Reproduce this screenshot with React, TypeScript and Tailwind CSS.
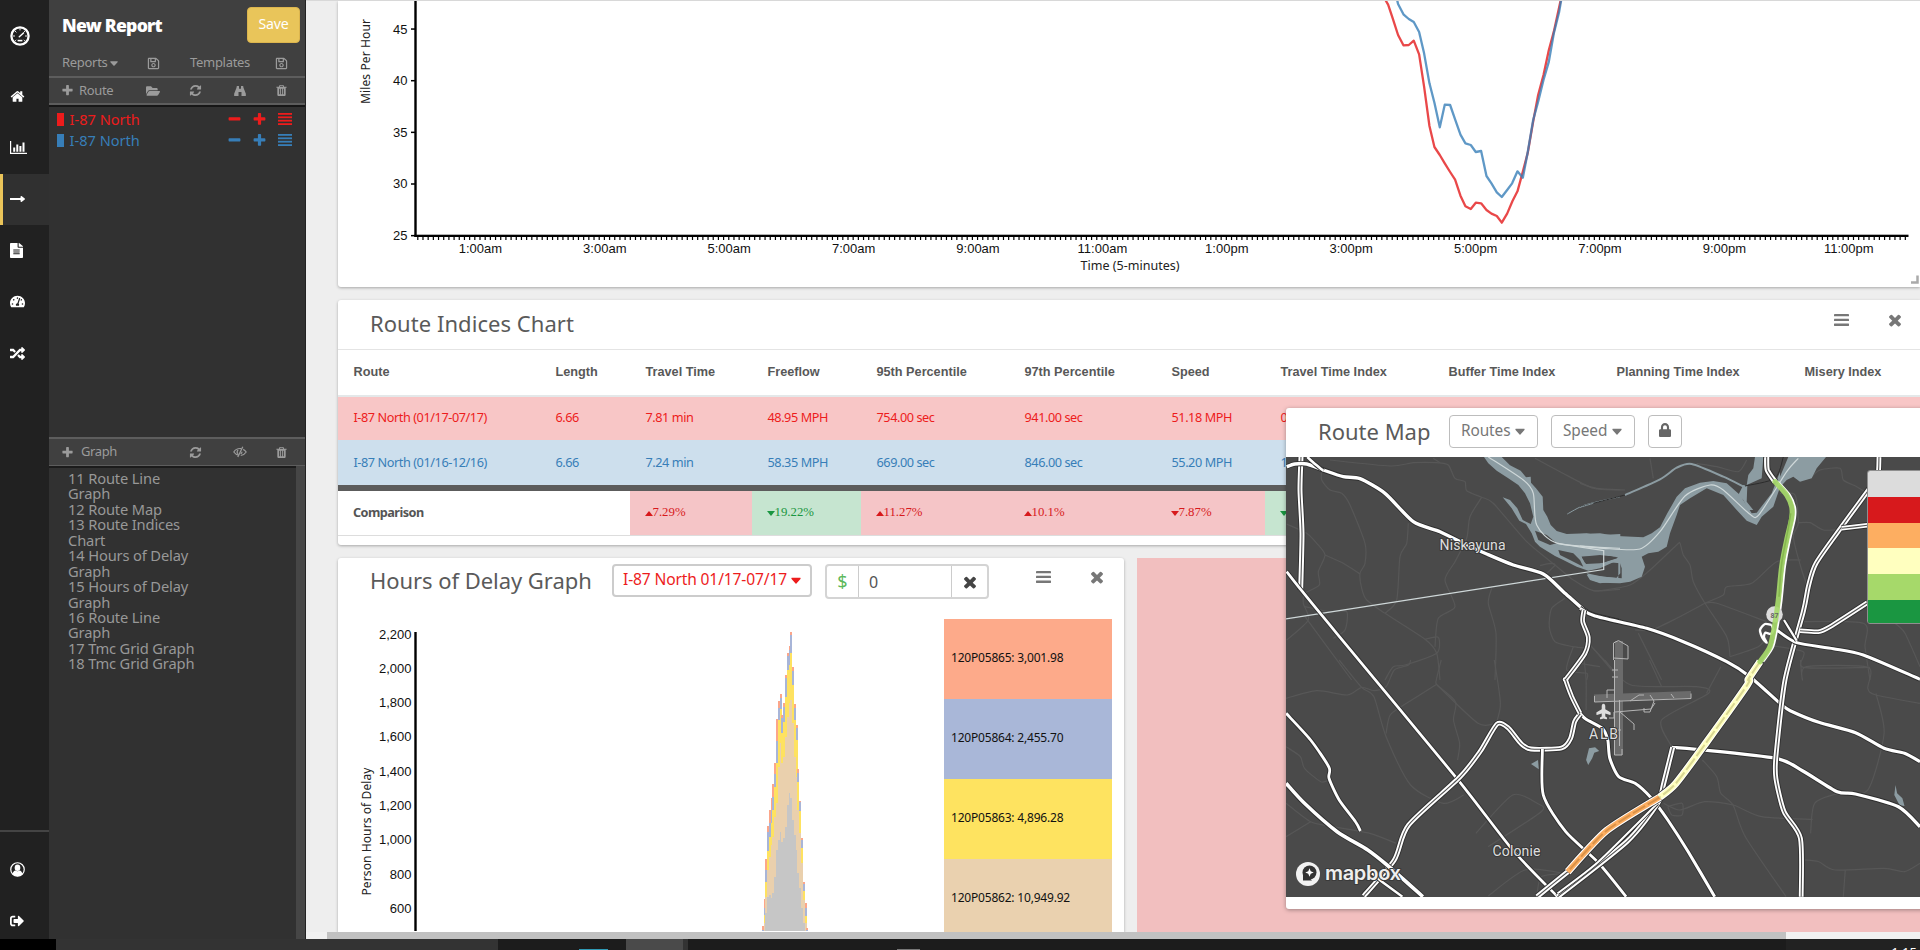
import type { ReactNode } from "react";
import {
  FaRegSave,
  FaFolderOpen,
  FaLongArrowAltRight,
  FaFileAlt,
  FaTachometerAlt,
  FaRandom,
  FaSignOutAlt,
  FaLock,
  FaCaretDown,
  FaPlane,
} from "react-icons/fa";

/* ---------- icons ---------- */

function Glyph({ d, className }: { d: string; className: string }) {
  return (
    <svg viewBox="0 0 1792 1792" className={className} fill="currentColor">
      <path d={d} />
    </svg>
  );
}

const TRASH =
  "M704 1376v-704q0-14-9-23t-23-9h-64q-14 0-23 9t-9 23v704q0 14 9 23t23 9h64q14 0 23-9t9-23zm256 0v-704q0-14-9-23t-23-9h-64q-14 0-23 9t-9 23v704q0 14 9 23t23 9h64q14 0 23-9t9-23zm256 0v-704q0-14-9-23t-23-9h-64q-14 0-23 9t-9 23v704q0 14 9 23t23 9h64q14 0 23-9t9-23zm-544-992h448l-48-117q-7-9-17-11h-317q-10 2-17 11zm928 32v64q0 14-9 23t-23 9h-96v948q0 83-47 143.500t-113 60.500h-832q-66 0-113-58.500t-47-141.500v-952h-96q-14 0-23-9t-9-23v-64q0-14 9-23t23-9h309l70-167q15-37 54-63t79-26h320q40 0 79 26t54 63l70 167h309q14 0 23 9t9 23z";
const HOME =
  "M1472 992v480q0 26-19 45t-45 19h-384v-384h-256v384h-384q-26 0-45-19t-19-45v-480q0-1 .5-3t.5-3l575-474 575 474q1 2 1 6zm223-69l-62 74q-8 9-21 11h-3q-13 0-21-7l-692-577-692 577q-12 8-24 7-13-2-21-11l-62-74q-8-10-7-23.500t11-21.500l719-599q32-26 76-26t76 26l244 204v-195q0-14 9-23t23-9h192q14 0 23 9t9 23v408l219 182q10 8 11 21.500t-7 23.500z";
const TIMES =
  "M1490 1322q0 40-28 68l-136 136q-28 28-68 28t-68-28l-294-294-294 294q-28 28-68 28t-68-28l-136-136q-28-28-28-68t28-68l294-294-294-294q-28-28-28-68t28-68l136-136q28-28 68-28t68 28l294 294 294-294q28-28 68-28t68 28l136 136q28 28 28 68t-28 68l-294 294 294 294q28 28 28 68z";
const PLUS =
  "M1600 736v192q0 40-28 68t-68 28h-416v416q0 40-28 68t-68 28h-192q-40 0-68-28t-28-68v-416h-416q-40 0-68-28t-28-68v-192q0-40 28-68t68-28h416v-416q0-40 28-68t68-28h192q40 0 68 28t28 68v416h416q40 0 68 28t28 68z";
const MINUS =
  "M1600 736v192q0 40-28 68t-68 28h-1216q-40 0-68-28t-28-68v-192q0-40 28-68t68-28h1216q40 0 68 28t28 68z";
const REFRESH =
  "M1639 1056q0 5-1 7-64 268-268 434.500t-478 166.500q-146 0-282.500-55t-243.500-157l-129 129q-19 19-45 19t-45-19-19-45v-448q0-26 19-45t45-19h448q26 0 45 19t19 45-19 45l-137 137q71 66 161 102t187 36q134 0 250-65t186-179q11-17 53-117 8-23 30-23h192q13 0 22.500 9.500t9.500 22.500zm25-800v448q0 26-19 45t-45 19h-448q-26 0-45-19t-19-45 19-45l138-138q-148-137-349-137-134 0-250 65t-186 179q-11 17-53 117-8 23-30 23h-199q-13 0-22.500-9.500t-9.500-22.500v-7q65-268 270-434.500t480-166.500q146 0 284 55.500t245 156.500l130-129q19-19 45-19t45 19 19 45z";

function Lines({ className }: { className: string }) {
  return (
    <svg viewBox="0 0 15 12" className={className} fill="currentColor" preserveAspectRatio="none">
      <rect y="0" width="15" height="2.300" rx="0.4" />
      <rect y="4.800" width="15" height="2.300" rx="0.4" />
      <rect y="9.600" width="15" height="2.300" rx="0.4" />
    </svg>
  );
}

function DenseLines({ className }: { className: string }) {
  return (
    <svg viewBox="0 0 14 12" className={className} fill="currentColor">
      <rect y="0" width="14" height="1.800" />
      <rect y="3.400" width="14" height="1.800" />
      <rect y="6.800" width="14" height="1.800" />
      <rect y="10.200" width="14" height="1.800" />
    </svg>
  );
}

function Binoculars() {
  return (
    <svg viewBox="0 0 14 12" className="h-[10px] w-[14px]" fill="currentColor">
      <path d="M3.200 0h2.600v3.200H8.200V0h2.600l.4 2.200L14 9.400V12H8.800V7.200H5.200V12H0V9.400L2.800 2.200z" />
    </svg>
  );
}

function HiddenEye() {
  return (
    <svg viewBox="0 0 14 12" className="h-[12px] w-[14px]" fill="none" stroke="currentColor" strokeWidth="1.200">
      <path d="M5.800 9.200C3.400 8.800 1.700 7.300.8 6c1.300-2 3.400-3.500 6.200-3.500.5 0 .9 0 1.300.1" />
      <path d="M10.200 3.400c1.300.6 2.300 1.600 3 2.600-1.100 1.700-3 3.200-5.400 3.500" />
      <path d="M5 7.800C3.800 6.800 3.800 5 5.200 4M9 5.800c0 1-.6 1.800-1.300 2.200M9.800.8L4.800 11" strokeWidth="1.300" />
    </svg>
  );
}

function UserBadge() {
  return (
    <svg viewBox="0 0 16 16" className="size-[15px]">
      <circle cx="8" cy="8" r="7.200" fill="none" stroke="#fff" strokeWidth="1.300" />
      <ellipse cx="8" cy="6.200" rx="3" ry="3.500" fill="#fff" />
      <path d="M2.800 12.800c.4-2.600 1.600-3.600 3-3.800 1 1.100 3.400 1.100 4.400 0 1.400.2 2.600 1.200 3 3.800-2.700 3.200-7.700 3.200-10.400 0z" fill="#fff" />
    </svg>
  );
}

function Gauge() {
  return (
    <svg viewBox="0 0 20 20" className="size-5" fill="none" stroke="#fff">
      <circle cx="10" cy="10" r="8.600" strokeWidth="2.300" />
      <path d="M10 2.400v2M3 10h2M15 10h2M5 5l1.400 1.400M15 5l-1.400 1.400M5.200 14.800l1-1M14.800 14.800l-1-1" strokeWidth="0.9" />
      <path d="M9.300 10.800l4.200-3.800" strokeWidth="1.500" strokeLinecap="round" />
      <path d="M7.600 14.600h4.800" strokeWidth="1.600" />
    </svg>
  );
}

function BarChartIcon() {
  return (
    <svg viewBox="0 0 17 13" className="h-[13px] w-[17px]" fill="#fff">
      <path d="M0 0h1.200v11.700H17V13H0zM3.200 6.500h2v4.300h-2zM6.300 3.500h2v7.300h-2zM9.400 5h2v5.800h-2zM12.500 1.500h2v9.300h-2z" />
    </svg>
  );
}

/* ---------- left rail ---------- */

function RailItem({ children, active }: { children: ReactNode; active?: boolean }) {
  return (
    <div
      className={
        active
          ? "flex h-[51.400px] shrink-0 items-center border-l-3 border-[#eac459] bg-[#303030] pb-px pl-[7px]"
          : "flex h-[51.400px] shrink-0 items-center pb-px pl-[10px]"
      }
    >
      {children}
    </div>
  );
}

function Rail() {
  return (
    <nav className="flex w-[49px] shrink-0 flex-col bg-[#212121] text-[15px] text-white">
      <div className="flex h-[71px] shrink-0 items-center pl-[10px]">
        <Gauge />
      </div>
      <RailItem>
        <Glyph d={HOME} className="size-[15px]" />
      </RailItem>
      <RailItem>
        <BarChartIcon />
      </RailItem>
      <RailItem active>
        <FaLongArrowAltRight className="h-[14px] w-[15px]" preserveAspectRatio="none" />
      </RailItem>
      <RailItem>
        <FaFileAlt className="h-[15px] w-[13px]" preserveAspectRatio="none" />
      </RailItem>
      <RailItem>
        <FaTachometerAlt />
      </RailItem>
      <RailItem>
        <FaRandom />
      </RailItem>
      <div className="mt-auto h-[109px] shrink-0 border-t-2 border-[#444] pt-3">
        <RailItem>
          <UserBadge />
        </RailItem>
        <RailItem>
          <FaSignOutAlt className="size-[14px]" />
        </RailItem>
      </div>
    </nav>
  );
}

/* ---------- sidebar ---------- */

function RouteRow({ colour, swatch }: { colour: string; swatch: string }) {
  return (
    <div className={`flex h-[20.800px] items-center pl-[7.500px] ${colour}`}>
      <span className={`h-[13px] w-[7px] ${swatch}`} />
      <span className="ml-[6px] w-[157px] pt-px text-[14.600px]">I-87 North</span>
      <Glyph d={MINUS} className="mr-[10px] size-[15px]" />
      <Glyph d={PLUS} className="mr-[11px] size-[15px]" />
      <DenseLines className="h-[12px] w-[14px]" />
    </div>
  );
}

const GRAPHS = [
  "11 Route Line Graph",
  "12 Route Map",
  "13 Route Indices Chart",
  "14 Hours of Delay Graph",
  "15 Hours of Delay Graph",
  "16 Route Line Graph",
  "17 Tmc Grid Graph",
  "18 Tmc Grid Graph",
];

function Sidebar() {
  return (
    <aside className="flex w-[257px] shrink-0 flex-col border-r border-[#222] bg-[#313131] text-[#9b9b9b]">
      <div className="bg-[#404040]">
        <div className="flex h-[50px] items-start justify-between pr-[5px] pl-[13px]">
          <h1 className="mt-[12px] text-[17.600px] leading-[26px] font-black tracking-[-0.75px] text-white">New Report</h1>
          <button className="mt-[7px] h-[36px] w-[53px] rounded border border-[#dcb54e] bg-[#e9c55a] pb-0.5 text-[14.200px] tracking-[-0.2px] text-white">Save</button>
        </div>
        <div className="grid h-[26px] grid-cols-[85px_43px_85px_1fr] items-center pl-[13px] text-[13px] tracking-[-0.3px]">
          <span className="flex items-center gap-[3px]">
            Reports <FaCaretDown className="h-[14px] w-[8px]" preserveAspectRatio="none" />
          </span>
          <FaRegSave className="size-[13px]" />
          <span>Templates</span>
          <FaRegSave className="size-[13px]" />
        </div>
        <div className="grid h-[29px] grid-cols-[85px_43px_44px_42px_1fr] items-center border-y-2 border-[#5d5d5d] pl-[12px] text-[13px] tracking-[-0.35px]">
          <span className="flex items-center gap-[5px]">
            <Glyph d={PLUS} className="size-[13px]" /> Route
          </span>
          <FaFolderOpen className="size-[14px]" />
          <Glyph d={REFRESH} className="size-[13px]" />
          <Binoculars />
          <Glyph d={TRASH} className="size-[13px]" />
        </div>
        <div className="h-[2px] bg-[#161616]" />
      </div>
      <div className="h-[330px] pt-[2px]">
        <RouteRow colour="text-[#ed1c1c]" swatch="bg-[#ed1c1c]" />
        <RouteRow colour="text-[#377eb8]" swatch="bg-[#377eb8]" />
      </div>
      <div className="grid h-[29px] grid-cols-[128px_44px_42px_1fr] items-center border-t-2 border-b border-[#5d5d5d] bg-[#404040] pl-[12px] text-[13px] tracking-[-0.4px]">
        <span className="flex items-center gap-[7px]">
          <Glyph d={PLUS} className="size-[13px]" /> Graph
        </span>
        <Glyph d={REFRESH} className="size-[13px]" />
        <HiddenEye />
        <Glyph d={TRASH} className="size-[13px]" />
      </div>
      <div className="flex min-h-0 flex-1">
        <ul className="flex-1 border-t-2 border-[#1c1c1c] pt-[3px] pl-[19px] text-[14.700px] leading-[15.430px] tracking-[-0.15px] text-[#989898]">
          {GRAPHS.map((g) => (
            <li key={g} className="w-[135px]">
              {g}
            </li>
          ))}
        </ul>
        <div className="w-[9px] bg-[#464646]" />
      </div>
    </aside>
  );
}

/* ---------- speed chart ---------- */

const HOURS = ["1:00am", "3:00am", "5:00am", "7:00am", "9:00am", "11:00am", "1:00pm", "3:00pm", "5:00pm", "7:00pm", "9:00pm", "11:00pm"];
const RED_LINE =
  "165,-12 178,14 190,55 204,105 218,136 232,135 245,122 259,163 272,260 286,378 299,441 313,465 326,490 340,516 353,539 367,587 380,619 394,627 407,608 421,610 435,630 448,641 462,648 475,668 489,641 503,603 516,574 530,515 543,458 557,365 570,285 584,225 598,150 611,95 630,-5";
const BLUE_LINE =
  "199,-12 204,12 218,43 232,57 245,66 259,96 272,160 286,250 299,308 313,382 326,314 340,315 353,358 367,404 380,430 394,435 407,456 421,453 435,528 448,550 462,577 475,591 489,570 502,550 516,514 530,533 543,455 557,360 570,305 584,240 598,185 611,100 625,35 631,-5";

function SpeedChart() {
  return (
    <svg viewBox="338 1 1582 286" className="block h-[286px] w-[1582px] font-['Liberation_Sans',sans-serif]">
      <g fill="#111" fontSize="13">
        {[45, 40, 35, 30, 25].map((v, i) => (
          <g key={v}>
            <text x="407.500" y={33.5 + i * 51.65} textAnchor="end">
              {v}
            </text>
            <rect x="411" y={28.3 + i * 51.65} width="5" height="1.500" fill="#000" />
          </g>
        ))}
        {HOURS.map((h, i) => (
          <text key={h} x={480.4 + i * 124.4} y="253" textAnchor="middle">
            {h}
          </text>
        ))}
      </g>
      <g fill="#000">
        <rect x="414.300" y="0" width="2.400" height="237" />
        <rect x="414.500" y="234.700" width="1494" height="2.300" />
        {Array.from({ length: 288 }, (_, i) => (
          <rect key={i} x={417.2 + i * 5.183} y="236" width="1.200" height="4" />
        ))}
      </g>
      <g fill="#222" className="font-['Noto_Sans',sans-serif]" fontSize="12">
        <text x="1130" y="270" textAnchor="middle" textLength="99" lengthAdjust="spacingAndGlyphs">
          Time (5-minutes)
        </text>
        <text transform="translate(370 61.500) rotate(-90)" textAnchor="middle" textLength="85">
          Miles Per Hour
        </text>
      </g>
      <g transform="translate(1320 0) scale(0.3827 0.33333)" fill="none" strokeWidth="2.300" strokeOpacity="0.8" strokeLinejoin="round">
        <polyline points={RED_LINE} stroke="#e41a1c" vectorEffect="non-scaling-stroke" />
        <polyline points={BLUE_LINE} stroke="#377eb8" vectorEffect="non-scaling-stroke" />
      </g>
      <path d="M1911 282.500h6.500v-7" fill="none" stroke="#aaa" strokeWidth="2.500" />
    </svg>
  );
}

/* ---------- indices table ---------- */

const COLS = "grid w-[1680px] grid-cols-[202px_90px_122px_109px_148px_147px_109px_168px_168px_188px_1fr]";
const HEADS = ["Route", "Length", "Travel Time", "Freeflow", "95th Percentile", "97th Percentile", "Speed", "Travel Time Index", "Buffer Time Index", "Planning Time Index", "Misery Index"];
const ROW1 = ["I-87 North (01/17-07/17)", "6.66", "7.81 min", "48.95 MPH", "754.00 sec", "941.00 sec", "51.18 MPH", "0.98"];
const ROW2 = ["I-87 North (01/16-12/16)", "6.66", "7.24 min", "58.35 MPH", "669.00 sec", "846.00 sec", "55.20 MPH", "1.08"];
const COMPARE: { up: boolean; good: boolean; text: string }[] = [
  { up: true, good: false, text: "7.29%" },
  { up: false, good: true, text: "19.22%" },
  { up: true, good: false, text: "11.27%" },
  { up: true, good: false, text: "10.1%" },
  { up: false, good: false, text: "7.87%" },
  { up: false, good: true, text: "9.1%" },
];

function IndicesTable() {
  return (
    <section className="h-[245px] overflow-hidden rounded-l-[3px] bg-white shadow-[0_1px_3px_rgba(0,0,0,0.3)]">
      <header className="flex h-[50px] items-center border-b border-[#e4e4e4] pr-[16px] pl-[32px] text-[#777]">
        <h2 className="flex-1 pb-[2px] text-[22px] tracking-[0.05px] text-[#5a5a5a]">Route Indices Chart</h2>
        <Lines className="mt-[-9px] mr-[37px] h-[12px] w-[15px]" />
        <Glyph d={TIMES} className="mt-[-9px] size-[18px]" />
      </header>
      <div className={`${COLS} h-[47px] items-center border-b-2 border-[#e4e8e9] font-['Liberation_Sans',sans-serif] text-[12.700px] font-bold text-[#585858]`}>
        {HEADS.map((h) => (
          <span key={h} className="pt-px pl-[15.500px] whitespace-nowrap">
            {h}
          </span>
        ))}
      </div>
      <div className={`${COLS} h-[43px] items-center bg-[#f8c6c6] text-[12.700px] tracking-[-0.43px] text-[#ed1c1c]`}>
        {ROW1.map((t, i) => (
          <span key={i} className="pb-[2px] pl-[15.500px] whitespace-nowrap">
            {t}
          </span>
        ))}
      </div>
      <div className={`${COLS} h-[45px] items-center bg-[#cddfed] text-[12.700px] tracking-[-0.43px] text-[#377eb8]`}>
        {ROW2.map((t, i) => (
          <span key={i} className="pl-[15.500px] whitespace-nowrap">
            {t}
          </span>
        ))}
      </div>
      <div className="h-[6px] bg-[#5c5c5c]" />
      <div className={`${COLS} h-[45px] border-b border-[#ddd] font-['Liberation_Serif',serif] text-[12.800px]`}>
        <span className="flex items-center pb-px pl-[15px] font-['Noto_Sans',sans-serif] text-[12.700px] font-bold tracking-[-0.55px] text-[#555]">Comparison</span>
        <span />
        {COMPARE.map((c) => (
          <span
            key={c.text}
            className={c.good ? "flex items-center bg-[#c6e5d0] pl-[14.500px] text-[#1a9641]" : "flex items-center bg-[#f5c5c7] pl-[14.500px] text-[#d7191c]"}
          >
            <svg viewBox="0 0 8 5" className="h-[5px] w-2" fill="currentColor">
              <path d={c.up ? "M0 5L4 0l4 5z" : "M0 0h8L4 5z"} />
            </svg>
            {c.text}
          </span>
        ))}
      </div>
    </section>
  );
}

/* ---------- hours of delay ---------- */

const STACK_COLOURS = ["#fca68a", "#a8b5d8", "#fee260", "#ead0ad", "#c6c6c6"];
/* centre, then the top of each stacked layer */
const STACKS: number[][] = [
  [848, 1128, 1140, 1142, 1142, 1142],
  [851.6, 1047, 1073, 1095, 1120, 1142],
  [855.1, 927, 960, 995, 1040, 1090],
  [858.6, 828, 845, 903, 960, 1040],
  [862.1, 780, 818, 860, 920, 1035],
  [865.6, 744, 780, 820, 885, 1043],
  [869.1, 702, 742, 780, 860, 1030],
  [872.6, 640, 671, 710, 800, 980],
  [876.1, 506, 572, 640, 760, 900],
  [879.6, 453, 475, 510, 650, 870],
  [883.1, 432, 445, 478, 580, 845],
  [886.6, 495, 505, 550, 640, 875],
  [890.1, 460, 470, 515, 620, 865],
  [893.6, 375, 385, 440, 560, 830],
  [897.1, 308, 318, 360, 500, 765],
  [900.6, 287, 300, 345, 460, 730],
  [904.1, 246, 256, 310, 450, 745],
  [907.6, 352, 362, 405, 520, 810],
  [911.1, 463, 473, 510, 620, 855],
  [914.6, 525, 535, 570, 680, 900],
  [918.1, 657, 668, 697, 780, 968],
  [921.6, 752, 757, 784, 850, 1015],
  [925.1, 863, 869, 893, 940, 1075],
  [928.6, 995, 1003, 1022, 1050, 1120],
  [932.1, 1060, 1075, 1098, 1120, 1142],
  [935.6, 1134, 1139, 1142, 1142, 1142],
];

const LEGEND = [
  { text: "120P05865: 3,001.98", bg: "bg-[#fdaa8a]" },
  { text: "120P05864: 2,455.70", bg: "bg-[#a9b7d8]" },
  { text: "120P05863: 4,896.28", bg: "bg-[#fee360]" },
  { text: "120P05862: 10,949.92", bg: "bg-[#ead1af]" },
];

function DelayCard() {
  return (
    <section className="flex h-[374px] w-[786px] shrink-0 flex-col overflow-hidden rounded-t-[3px] bg-white shadow-[0_1px_3px_rgba(0,0,0,0.3)]">
      <header className="flex h-[61px] shrink-0 items-start pt-[6px] pl-[32px] text-[#777]">
        <h2 className="w-[242px] text-[22px] leading-[32px] tracking-[-0.05px] whitespace-nowrap text-[#5a5a5a]">Hours of Delay Graph</h2>
        <button className="flex h-[33px] w-[200px] items-center gap-[4px] rounded border-2 border-[#ccc] pb-px pl-[9px] text-[15.600px] tracking-[-0.15px] whitespace-nowrap text-[#ed1c1c]">
          I-87 North 01/17-07/17
          <FaCaretDown className="h-[18px] w-[10px] shrink-0" preserveAspectRatio="none" />
        </button>
        <div className="ml-[13px] flex h-[35px] w-[164px] items-center rounded border-2 border-[#d4d4d4] text-[16px]">
          <span className="flex h-full w-[32px] items-center justify-center border-r border-[#ccc] text-[18px] text-[#5cb85c]">$</span>
          <span className="flex h-full flex-1 items-center pl-[10px] text-[#555]">0</span>
          <span className="flex h-full w-[36px] items-center justify-center border-l border-[#ccc] text-[#444]">
            <Glyph d={TIMES} className="size-[18px]" />
          </span>
        </div>
        <Lines className="mt-[7px] ml-[47px] h-[12px] w-[15px]" />
        <Glyph d={TIMES} className="mt-[4px] ml-[37px] size-[18px]" />
      </header>
      <div className="flex flex-1">
        <svg viewBox="338 619 606 313" className="block h-[313px] w-[606px] font-['Liberation_Sans',sans-serif]">
          <g fill="#111" fontSize="13">
            {["2,200", "2,000", "1,800", "1,600", "1,400", "1,200", "1,000", "800", "600"].map((v, i) => (
              <text key={v} x="411.500" y={638.5 + i * 34.3} textAnchor="end">
                {v}
              </text>
            ))}
          </g>
          <rect x="414.300" y="632" width="2.400" height="299" fill="#000" />
          <text transform="translate(370.500 831.500) rotate(-90)" textAnchor="middle" textLength="128" fontSize="12" fill="#222" className="font-['Noto_Sans',sans-serif]">
            Person Hours of Delay
          </text>
          <g transform="translate(330 550) scale(0.5102 0.33333)" shapeRendering="crispEdges">
            {STACKS.map(([x, ...tops]) =>
              tops.map((t, k) => {
                const bottom = k < 4 ? tops[k + 1] : 1143;
                return <rect key={`${x}-${k}`} x={x - 1.8} y={t} width="3.900" height={Math.max(0, bottom - t)} fill={STACK_COLOURS[k]} />;
              }),
            )}
          </g>
        </svg>
        <div className="w-[168px]">
          {LEGEND.map((l) => (
            <div key={l.text} className={`flex h-[80px] items-center pb-[2px] pl-[7px] text-[12px] tracking-[-0.2px] text-[#111] ${l.bg}`}>
              {l.text}
            </div>
          ))}
        </div>
      </div>
    </section>
  );
}

/* ---------- map ---------- */

type Pt = [number, number];
const tile = (ox: number, oy: number, sx: number, sy: number) => (s: string): Pt[] =>
  s.split(" ").map((p) => {
    const [x, y] = p.split(",").map(Number);
    return [ox + x / sx, oy + y / sy];
  });
const A = tile(1280, 400, 3, 3);
const B = tile(1580, 400, 3, 3);
const C = tile(1280, 660, 2.45, 3);

const n = (v: number) => v.toFixed(1);
function smooth(p: Pt[]): string {
  let d = `M${n(p[0][0])} ${n(p[0][1])}`;
  for (let i = 0; i < p.length - 1; i++) {
    const p0 = p[i - 1] ?? p[i];
    const p1 = p[i];
    const p2 = p[i + 1];
    const p3 = p[i + 2] ?? p2;
    d += `C${n(p1[0] + (p2[0] - p0[0]) / 8)} ${n(p1[1] + (p2[1] - p0[1]) / 8)} ${n(p2[0] - (p3[0] - p1[0]) / 8)} ${n(p2[1] - (p3[1] - p1[1]) / 8)} ${n(p2[0])} ${n(p2[1])}`;
  }
  return d;
}
const area = (p: Pt[]) => "M" + p.map(([x, y]) => `${n(x)} ${n(y)}`).join("L") + "Z";

const MINOR: Pt[][] = [
  A("150,180 330,198 400,188 470,188 505,195 525,235 555,245 560,272 605,292 640,310 740,425 825,495 880,540 940,572 1020,568"),
  B("40,572 60,572 150,555 210,510 290,435 300,430 310,465 330,495 340,545 375,610 440,710 450,770"),
  A("125,210 125,240 150,270 185,280 210,315 255,430 255,490 240,520 245,565 260,600 315,640 435,718 470,760 480,840"),
  A("605,292 570,350 560,415 525,485 495,540 525,620 475,655 465,740"),
  A("385,370 380,430 360,470 350,600 315,640"),
  A("20,372 80,400 110,430 135,465 115,515 118,555 75,580 70,610 85,660 20,720"),
  A("135,465 190,490 240,522"),
  A("75,650 215,840"),
  A("75,620 150,635 200,635 195,690 160,715"),
  A("780,497 810,490 825,495 800,520"),
  A("635,565 625,610 648,700 645,840"),
  A("855,595 815,625 808,680 825,725 880,740 920,745"),
  A("880,740 860,810 920,820 920,840"),
  A("940,745 1020,840"),
  A("435,718 475,712 470,760 375,795 340,800 315,840"),
  A("765,175 840,215 940,265 1020,270"),
  A("460,175 480,188"),
  B("0,250 50,265 135,270"),
  B("210,175 220,235"),
  B("350,190 410,200 475,215 500,180"),
  B("690,235 720,210 780,205 790,240 830,260 862,280"),
  B("600,280 645,285 655,370 640,410 665,510 690,580"),
  B("655,368 690,368 730,390 785,388"),
  B("662,480 590,485 515,550 440,560 430,585 375,610 290,655 215,690 165,690"),
  B("375,610 410,610 560,665"),
  B("570,700 535,740 450,770"),
  B("650,665 850,670 855,740 870,840"),
  B("945,670 975,700 1020,800"),
  B("560,735 670,755 670,802 870,802"),
  B("175,700 245,840"),
  B("0,790 60,800"),
  B("30,735 100,810"),
  C("15,115 90,92 165,105 200,82 230,92 260,80 280,30 315,15 320,0"),
  C("145,0 200,82 230,110 260,230 320,375 400,430 450,405"),
  C("395,0 383,60 385,75 430,125 425,180 440,250 435,300"),
  C("385,72 310,130 270,165 260,220"),
  C("385,75 485,190 530,190"),
  C("525,0 540,130 530,190"),
  C("15,260 50,290 60,325 100,365 120,360"),
  C("15,430 75,485 130,500 220,520 285,550"),
  C("15,530 75,485"),
  C("480,520 570,405 630,430 640,455 510,560"),
  C("745,0 750,60 750,150"),
  C("795,0 860,75 1020,80 1050,100 935,180 960,260"),
  C("905,0 935,80"),
  C("1080,20 1045,100"),
  C("1275,0 1280,60 1290,20 1440,22 1440,85 1460,105 1568,130"),
  C("1460,100 1480,220 1440,390 1370,400 1310,430 1300,520"),
  C("1035,300 1070,350 1080,400 1110,435 1140,530 1240,710"),
  C("940,430 980,450 1040,425 1110,435 1180,470 1305,478"),
  C("950,440 985,430 985,465 960,465 950,440"),
  C("1285,600 1320,605 1360,630 1480,625 1530,635 1568,610"),
  C("1385,630 1380,710"),
  C("510,708 600,630 690,640 640,650 630,700"),
];

const WATER: Pt[][] = [
  A("612,171 665,171 690,196 722,212 738,232 752,230 753,248 768,265 788,290 790,330 802,350 812,375 830,393 860,402 920,400 950,406 1021,402 1021,520 1000,545 960,550 930,540 920,524 975,530 1015,535 1015,480 960,505 925,512 890,500 850,480 825,468 780,440 765,425 755,400 738,372 718,362 695,325 668,292 690,300 712,325 728,360 752,372 760,350 750,310 735,280 715,255 685,235 650,212 625,190"),
  B("0,402 60,400 110,408 190,412 215,400 240,382 262,340 290,290 315,265 360,248 400,243 440,250 480,285 515,340 530,338 575,280 600,215 600,230 625,171 738,171 710,205 695,235 660,245 640,230 620,240 600,262 580,320 545,350 530,375 500,362 470,330 430,285 380,265 330,295 300,315 290,345 270,400 260,440 235,455 205,460 185,470 195,500 185,530 150,545 120,550 60,548 35,540 20,520 70,530 125,535 125,505 120,490 70,485 0,500"),
  B("525,171 550,171 545,235 500,255 505,225 520,205"),
  B("490,255 502,258 500,305 520,330 505,330 490,300 475,285"),
  C("615,312 632,300 634,328"),
  C("757,265 772,262 782,273 770,278 765,295 755,315 750,300"),
  C("1508,375 1512,400 1525,415 1530,438 1518,436 1505,405"),
];
const ISLANDS: Pt[][] = [
  A("765,392 800,405 830,430 810,435 775,420"),
  A("835,450 880,460 900,480 910,500 870,480 840,465"),
  A("905,470 990,468 1012,475 960,490 918,492"),
  B("5,470 60,465 115,472 70,488 15,488"),
];

type RoadSpec = { p: Pt[]; w: number; dual?: boolean };
const ROADS: RoadSpec[] = [
  { p: A("63,171 60,270 66,400 62,570"), w: 5, dual: true },
  { p: A("20,200 45,192 80,192 130,210 190,230 240,236 315,280 400,365 480,395 560,435 620,462 700,495 790,522 850,575 912,630 940,645 1020,665"), w: 3.4 },
  { p: A("82,171 105,192 130,212"), w: 2.6 },
  { p: B("0,625 45,648 200,685 310,725 440,785 510,830").concat(C("1225,130 1250,152 1320,187 1410,218 1480,265 1530,280 1568,305")), w: 3.2 },
  { p: A("20,515 65,572 170,700").concat(C("435,358 570,570 680,710")), w: 2.7 },
  { p: C("735,160 750,178 790,205 803,240 808,295 830,350 870,370 908,412 950,480 1000,575 1065,710"), w: 3 },
  { p: C("735,162 722,185 712,235 690,264 615,267 590,250 560,205 532,192 490,275 440,352 315,495 280,600 205,708"), w: 4.8, dual: true },
  { p: A("912,630 908,665 925,712 915,760 860,835").concat(C("700,60 715,110 735,160")), w: 4.6, dual: true },
  { p: C("643,267 645,405 700,515 780,608 848,710"), w: 2.8 },
  { p: C("15,160 75,240 120,322 120,355 145,420 185,485 197,513"), w: 2.8 },
  { p: C("15,370 60,430 140,515 215,570 265,618 350,710"), w: 3.6 },
  { p: C("225,640 250,665 300,710"), w: 2.4 },
  { p: C("960,262 1020,268 1215,295 1280,332 1365,395 1410,402 1515,440 1568,500"), w: 3.3 },
  { p: B("897,171 893,230 862,275 785,380 708,490 685,560 670,635 615,840").concat(C("1215,290 1215,355 1235,455 1275,535 1277,710")), w: 4.8, dual: true },
  { p: B("785,385 862,376"), w: 4.6, dual: true },
  { p: B("660,692 715,695 750,680 862,608"), w: 4.6, dual: true },
  { p: B("560,171 562,210 585,245"), w: 5.2, dual: true },
  { p: B("590,690 650,728 760,746 850,765 1020,838"), w: 3 },
  { p: B("612,660 650,722"), w: 2.2 },
  { p: C("962,262 940,370 925,430 850,545 680,710"), w: 5, dual: true },
  { p: C("925,430 780,605 680,700"), w: 2 },
  { p: C("705,635 630,710"), w: 5, dual: true },
];
const LOOP = B("575,675 555,672 540,690 548,715 560,728 552,712 556,698 572,702 580,690 575,675");
const I87_GREEN = B("585,245 620,285 635,320 635,355 620,420 605,500 595,600 585,670 570,740 540,785");
const I87_YELLOW = B("540,785 505,838").concat(C("1145,75 1040,255 970,370 930,412"));
const I87_ORANGE = C("930,412 800,512 705,635");

function Road({ p, w, dual }: RoadSpec) {
  const d = smooth(p);
  return (
    <g fill="none" strokeLinejoin="round">
      <path d={d} stroke="#2e2e2e" strokeWidth={w + 1.8} />
      <path d={d} stroke="#fff" strokeWidth={w} />
      {dual && <path d={d} stroke="#505050" strokeWidth="1.100" />}
    </g>
  );
}

function Segment({ p, colour, shade }: { p: Pt[]; colour: string; shade: string }) {
  const d = smooth(p);
  return (
    <g fill="none">
      <path d={d} stroke="#333" strokeWidth="9" />
      <path d={d} stroke="#fff" strokeWidth="7.400" />
      <path d={d} stroke={colour} strokeWidth="5.200" />
      <path d={d} stroke={shade} strokeWidth="2" strokeDasharray="14 3" />
    </g>
  );
}

function MapCanvas() {
  return (
    <svg viewBox="1286 457 634 440" className="block h-[440px] w-[634px] bg-[#4a4a4a]">
      <g fill="none" stroke="#575757" strokeWidth="1.200">
        {MINOR.map((p, i) => (
          <path key={i} d={smooth(p)} />
        ))}
      </g>
      <g fill="#8c9ca2">
        {WATER.map((p, i) => (
          <path key={i} d={area(p)} />
        ))}
      </g>
      <g fill="#4a4a4a">
        {ISLANDS.map((p, i) => (
          <path key={i} d={area(p)} />
        ))}
      </g>
      <g fill="none" stroke="#8c9ca2" strokeWidth="1.500">
        <path d={smooth(A("862,342 915,315 1020,290"))} strokeWidth="1" />
        <path d={smooth(B("0,320 135,285"))} stroke="#2c2c2c" strokeWidth="1" />
        <path d={smooth(B("0,322 40,310"))} strokeWidth="1" />
        <path d={smooth(B("135,285 240,238 290,203 335,192 430,230 495,262"))} strokeWidth="2" />
      </g>
      <path d={smooth(B("495,258 585,235 610,171"))} fill="none" stroke="#2c2c2c" strokeWidth="1" />
      <g fill="none" stroke="#cfd8d9" strokeWidth="1.200">
        <path d={smooth(A("625,171 730,240 760,280 770,375 833,430 1020,445"))} />
        <path d={smooth(B("0,438 70,445 180,447 240,395 315,288 390,255 430,270 510,343 538,343 620,215 655,175"))} />
        <path d={smooth(A("833,430 972,452"))} />
        <path d="M1286 618.800L1603.700 569.500V550" />
      </g>

      {/* airport runways */}
      <g fill="#6b6b6b">
        <rect x="1615" y="641" width="8" height="114" />
        <path d="M1594 694.500L1691 691v7L1594 702z" />
      </g>
      <g fill="none" stroke="#b5b5b5" strokeWidth="1">
        <path d="M1613.500 660v-17l5-2.500 9.500 5.500v13l-14.500-1M1614.500 660v95h7.500v-6M1619.500 700v46" />
        <path d="M1594.500 696v6l96.500-3.500v-5M1615 712l36-3 4-6M1620 712l14 12v6M1630 701l9-6h5M1650 695l4 6-4 11h-6v-4M1612 670h6M1612 677h6M1614 690h-7v8M1616 730h5M1609 718h5v-6M1671 694l3 4" />
      </g>

      {ROADS.map((r, i) => (
        <Road key={i} {...r} />
      ))}
      <path d={smooth(LOOP)} fill="none" stroke="#fff" strokeWidth="2.400" />

      <Segment p={I87_ORANGE} colour="#fdae61" shade="#d99147" />
      <Segment p={I87_YELLOW} colour="#ffffbf" shade="#d9d793" />
      <path d={smooth(I87_GREEN)} fill="none" stroke="#fff" strokeWidth="2.200" transform="translate(3.200 0)" />
      <circle cx="1774.500" cy="614.500" r="8.300" fill="#dcdcdc" />
      <g fill="none">
        <path d={smooth(I87_GREEN)} stroke="#a6d96a" strokeWidth="5.200" strokeLinecap="round" strokeOpacity="0.92" />
        <path d={smooth(B("632,340 622,400 605,490 597,590"))} stroke="#86b84f" strokeWidth="1.600" />
      </g>
      <text x="1774.500" y="617.500" fontSize="7" fontWeight="700" textAnchor="middle" fill="#666" className="font-['Roboto',sans-serif]">
        87
      </text>

      {/* place names */}
      <g
        fill="#dedede"
        stroke="#3a3a3a"
        strokeWidth="2.200"
        paintOrder="stroke"
        strokeLinejoin="round"
        fontSize="14"
        textAnchor="middle"
        className="font-['Roboto',sans-serif]"
      >
        <text x="1472.500" y="550" textLength="66">
          Niskayuna
        </text>
        <text x="1516.500" y="856" textLength="48">
          Colonie
        </text>
        <text x="1603.500" y="739" textLength="29">
          ALB
        </text>
        <text x="1363" y="880" fontSize="20" fontWeight="600" fill="#eee" textLength="76" className="font-['Inter',sans-serif]">
          mapbox
        </text>
      </g>
      <FaPlane x="1595.500" y="705.500" width="14" height="14" color="#ddd" transform="rotate(-90 1602.500 712.500)" />

      {/* provider badge */}
      <circle cx="1308" cy="874" r="12" fill="#f2f2f2" />
      <circle cx="1309.500" cy="872.500" r="7" fill="#333" />
      <path d="M1303 872v8.500h9z" fill="#333" />
      <path d="M1309.500 868.300l1.200 3 3 1.200-3 1.200-1.200 3-1.200-3-3-1.200 3-1.200z" fill="#fff" />
    </svg>
  );
}

function MapCard() {
  return (
    <section className="absolute top-[408px] left-[1286px] h-[501px] w-[660px] rounded-[3px] bg-white shadow-[0_1px_4px_rgba(0,0,0,0.35)]">
      <header className="flex h-[49px] items-start pt-[7px] pl-[32px] text-[#777]">
        <h2 className="w-[131px] text-[22px] leading-[32px] whitespace-nowrap text-[#5a5a5a]">Route Map</h2>
        <button className="flex h-[33px] w-[89px] items-center gap-[5px] rounded border border-[#bdbdbd] pb-px pl-[11px] text-[15.400px] tracking-[-0.1px]">
          Routes <FaCaretDown className="h-[18px] w-[10px]" preserveAspectRatio="none" />
        </button>
        <button className="ml-[13px] flex h-[33px] w-[84px] items-center gap-[5px] rounded border border-[#bdbdbd] pb-px pl-[11px] text-[15.400px] tracking-[-0.1px]">
          Speed <FaCaretDown className="h-[18px] w-[10px]" preserveAspectRatio="none" />
        </button>
        <button className="ml-[13px] flex h-[33px] w-[34px] items-center justify-center rounded border border-[#bdbdbd] pb-[3px] text-[#666]">
          <FaLock className="h-[14px] w-[12px]" preserveAspectRatio="none" />
        </button>
      </header>
      <MapCanvas />
      <div className="absolute top-[62px] left-[581px] w-[70px] overflow-hidden rounded-[3px] border border-[#8f8f8f]">
        <div className="h-[26px] bg-[#dcdcdc]" />
        <div className="h-[26px] bg-[#d7191c]" />
        <div className="h-[25px] bg-[#fdae61]" />
        <div className="h-[26px] bg-[#ffffbf]" />
        <div className="h-[26px] bg-[#a6d96a]" />
        <div className="h-[23px] bg-[#1a9641]" />
      </div>
    </section>
  );
}

/* ---------- page ---------- */

export default function App() {
  return (
    <div className="relative flex h-[950px] w-[1920px] flex-col overflow-hidden bg-[#eee] font-['Noto_Sans',sans-serif]">
      <div className="flex h-[939px] shrink-0">
        <Rail />
        <Sidebar />
        <main className="flex min-w-0 flex-1 flex-col overflow-hidden border-t border-[#d8d8d8]">
          <div className="flex h-[931px] shrink-0 flex-col gap-[13px] overflow-hidden pl-8">
            <section className="h-[286px] shrink-0 rounded-bl-[3px] bg-white shadow-[0_1px_3px_rgba(0,0,0,0.3)]">
              <SpeedChart />
            </section>
            <IndicesTable />
            <div className="flex gap-[13px]">
              <DelayCard />
              <div className="flex-1 bg-[#f2bfbf]" />
            </div>
          </div>
          <div className="flex h-[7px] shrink-0 bg-[#f1f1f1] pl-[21px]">
            <div className="w-[1459px] bg-[#c1c1c1]" />
          </div>
        </main>
      </div>
      <footer className="flex h-[11px] overflow-hidden bg-[#1c1c1c]">
        <div className="w-[56px] bg-black" />
        <div className="w-[442px] bg-[#333]" />
        <div className="flex w-[128px] items-end pl-[81px]">
          <div className="h-px w-[29px] bg-[#2f9ab5]" />
        </div>
        <div className="w-[57px] bg-[#4a4a4a]" />
        <div className="w-[5px] bg-[#333]" />
        <div className="flex w-[1098px] items-end pl-[209px]">
          <div className="h-px w-[23px] bg-[#777]" />
        </div>
        <div className="flex flex-1 justify-end bg-[#222] pt-[5px] pr-[3px] text-[13px] leading-4 text-white">1:15</div>
      </footer>
      <MapCard />
    </div>
  );
}
